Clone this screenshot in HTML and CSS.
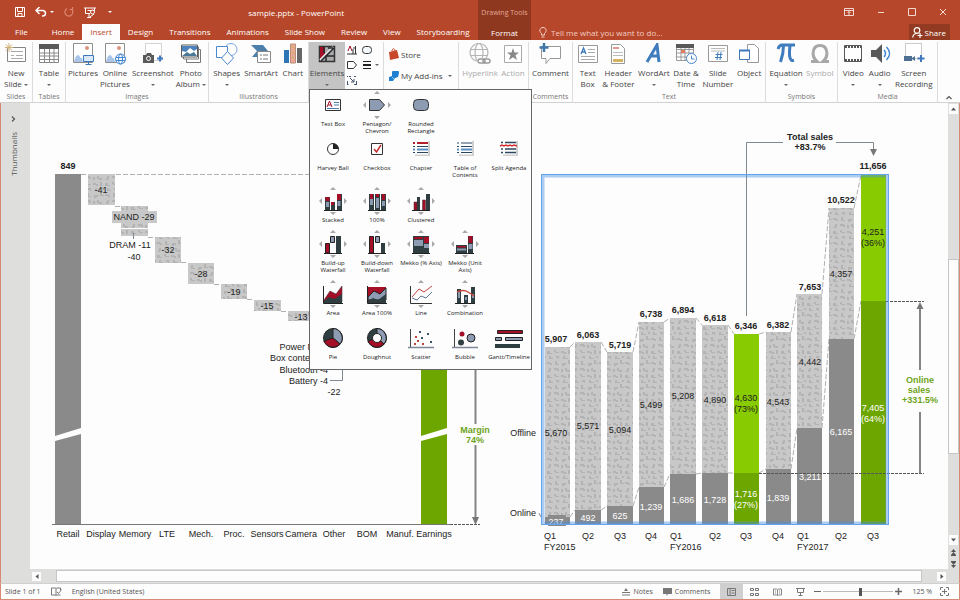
FILE: index.html
```html
<!DOCTYPE html>
<html lang="en">
<head>
  <meta charset="UTF-8">
  <title>sample.pptx - PowerPoint</title>
  <link rel="stylesheet" href="styles.css">
</head>
<body>

<svg class="sprite" aria-hidden="true">
  <!-- resize handles round a chart icon -->
  <symbol id="handles-v" viewBox="0 0 32 28">
    <path d="M13 3l3-3 3 3zM13 25l3 3 3-3z" fill="#a8a8a8"/>
  </symbol>
  <symbol id="handles" viewBox="0 0 32 28">
    <path d="M13 3l3-3 3 3zM13 25l3 3 3-3zM5 11v6l-3-3zM27 11v6l3-3z" fill="#a8a8a8"/>
  </symbol>
</svg>

<div class="window">

  <header class="header">
    <div class="titlebar">
      <div class="quick">
        <button aria-label="Save"><svg width="10" height="10" viewBox="0 0 10 10"><path d="M.5.5h9v9h-9zM2.5.5v4h5v-4M3 9V6.5h4V9" fill="none" stroke="#fff"/></svg></button>
        <button aria-label="Undo"><svg width="12" height="10" viewBox="0 0 12 10"><path d="M4.5 0L1 3.5 4.500 7M1.500 3.500H7.500c4 0 4 5.500 0 5.500H7" fill="none" stroke="#fff" stroke-width="1.5"/></svg><i class="caret light"></i></button>
        <button aria-label="Redo"><svg width="10" height="10" viewBox="0 0 10 10"><path d="M3 1.500a4 4 0 1 0 4.500.5M5.500 2.500H8.500V0" fill="none" stroke="#d98671" stroke-width="1.2"/></svg></button>
        <button aria-label="Start slide show"><svg width="12" height="11" viewBox="0 0 12 11"><path d="M0 1h12M1.500 1v5.500H6M10.500 1v3M5 7v3.500M3 10.500h4M3.500 3.500h5" fill="none" stroke="#fff"/><circle cx="8.5" cy="5" r="2" fill="none" stroke="#fff"/><path d="M6 10l4-3" stroke="#fff"/></svg></button>
        <button aria-label="Customize toolbar"><i class="caret light bar"></i></button>
      </div>
      <span class="title">sample.pptx - PowerPoint</span>
    </div>
    <nav class="tabs">
      <a class="tab file" href="#">File</a>
      <a class="tab" href="#">Home</a>
      <a class="tab active" href="#">Insert</a>
      <a class="tab" href="#">Design</a>
      <a class="tab" href="#">Transitions</a>
      <a class="tab" href="#">Animations</a>
      <a class="tab" href="#">Slide Show</a>
      <a class="tab" href="#">Review</a>
      <a class="tab" href="#">View</a>
      <a class="tab" href="#">Storyboarding</a>
    </nav>
    <div class="context">
      <span>Drawing Tools</span>
      <a href="#">Format</a>
    </div>
    <div class="controls">
      <button aria-label="Ribbon display options"><svg width="10" height="8" viewBox="0 0 10 8"><path d="M.5.5h9v7h-9zM.5 2.500h9M5 7V3.500M3.500 5L5 3.500 6.500 5" fill="none" stroke="#f3d9d2"/></svg></button>
      <button aria-label="Minimize"><svg width="8" height="8" viewBox="0 0 8 8"><path d="M1 4.500h6" stroke="#f3d9d2"/></svg></button>
      <button aria-label="Maximize"><svg width="8" height="8" viewBox="0 0 8 8"><path d="M.5.5h7v7h-7z" fill="none" stroke="#f3d9d2"/></svg></button>
      <button aria-label="Close"><svg width="8" height="8" viewBox="0 0 8 8"><path d="M1 1l6 6M7 1L1 7" stroke="#f3d9d2"/></svg></button>
    </div>
    <div class="help">
      <label class="tell"><svg width="8" height="11" viewBox="0 0 8 11"><path d="M2.500 8V6.500C-.5 4 1 .5 4 .5s4.500 3.500 1.500 6V8zM2.500 10h3" fill="none" stroke="#f5d5cc"/></svg><input type="text" placeholder="Tell me what you want to do..." aria-label="Tell me what you want to do"></label>
      <button class="share"><svg width="11" height="11" viewBox="0 0 11 11"><circle cx="5" cy="3.5" r="2.8" fill="none" stroke="#fff" stroke-width="1.2"/><path d="M.7 10.500C1 8 2.500 6.500 5 6.500M8 6v5M5.500 8.500h5" fill="none" stroke="#fff" stroke-width="1.2"/></svg>Share</button>
    </div>
  </header>

  <div class="ribbon">
    <section class="group">
      <div class="tools">
        <button class="tool"><svg viewBox="0 0 22 22"><path d="M2.500 4.500h18v14h-18z" fill="#fff" stroke="#858585"/><path d="M6 8.500h12M6 12.500h3M11 12.500h7M6 15.500h12" stroke="#aaa"/><path d="M4 0v9M0 4.500h8.500M1 1.500l6 6M7 1.500l-6 6" stroke="#cdb27a"/></svg>New<br><span>Slide <i class="caret"></i></span></button>
      </div>
      <h2>Slides</h2>
    </section>
    <section class="group">
      <div class="tools">
        <button class="tool"><svg viewBox="0 0 22 22"><path d="M1.500 2.500h19v17h-19zM1.500 10h19M1.500 13h19M1.500 16.500h19M6.500 5v14M11.500 5v14M16 5v14" fill="#fff" stroke="#888"/><path d="M1 1h20v5H1z" fill="#595959"/></svg>Table<br><i class="caret"></i></button>
      </div>
      <h2>Tables</h2>
    </section>
    <section class="group">
      <div class="tools">
        <button class="tool"><svg viewBox="0 0 22 22"><path d="M1.500 .5h19v19h-19z" fill="#fff" stroke="#8f8f8f"/><circle cx="15" cy="5" r="2" fill="#d8957b"/><path d="M2 19c1-4 2-7 4-7s2 4 4 3l1 4z" fill="#a9c6ea"/><path d="M11.500 12.500h10v6h-10z" fill="#d9e9f8" stroke="#3f78bb"/><path d="M16.500 19v2M13.500 21.500h6" stroke="#3f78bb"/></svg>Pictures</button>
        <button class="tool"><svg viewBox="0 0 22 22"><path d="M1.500 .5h19v19h-19z" fill="#fff" stroke="#8f8f8f"/><circle cx="15" cy="5" r="2" fill="#d8957b"/><path d="M2 19c1-4 2-7 4-7s2 4 4 3l1 4z" fill="#a9c6ea"/><circle cx="16.5" cy="16" r="5" fill="#fff" stroke="#3f86cf"/><ellipse cx="16.5" cy="16" rx="2" ry="5" fill="none" stroke="#3f86cf"/><path d="M12 14.500h9M12 17.500h9" stroke="#3f86cf"/></svg>Online<br>Pictures</button>
        <button class="tool"><svg viewBox="0 0 22 22"><path d="M3.500 .5h16v17h-16z" fill="#fff" stroke="#aaa" stroke-dasharray="1 1"/><path d="M1 12h3l1-2h4l1 2h2v8H1z" fill="#595959"/><circle cx="6.5" cy="15.5" r="2" fill="none" stroke="#fff"/><path d="M18 12.500v6M15 15.500h6" stroke="#3f78bb" stroke-width="2"/></svg>Screenshot<br><i class="caret"></i></button>
        <button class="tool"><svg viewBox="0 0 22 22"><path d="M6.500 6.500h14v13h-14z" fill="#fff" stroke="#777"/><path d="M3.500 4h15v12h-15z" fill="#fff" stroke="#777"/><path d="M1.500 2h16v12h-16z" fill="#fff" stroke="#595959"/><path d="M2 3h15v3l-3 2-4-3-4 4-4-1z" fill="#4c83bd"/><path d="M2 13l5-4 3 2 4-2 3 4z" fill="#4c7898"/></svg>Photo<br><span>Album <i class="caret"></i></span></button>
      </div>
      <h2>Images</h2>
    </section>
    <section class="group">
      <div class="tools">
        <button class="tool"><svg viewBox="0 0 22 22"><circle cx="15" cy="6.5" r="6" fill="#fff" stroke="#7ba5d8"/><path d="M.5 3.500h11v11H.5z" fill="#fff" stroke="#4b88cf"/><path d="M11.500 8.500l6 6.500-6 6.500-6-6.500z" fill="#fff" stroke="#4b88cf"/></svg>Shapes<br><i class="caret"></i></button>
        <button class="tool"><svg viewBox="0 0 22 22"><path d="M1 2h12l5 6-4 6H2l5-6z" fill="#4d7fab"/><path d="M7.500 8.500h13v11h-13z" fill="#fff" stroke="#888"/><path d="M10 12h2M13 12h5M10 16h2M13 16h5" stroke="#777"/></svg>SmartArt</button>
        <button class="tool"><svg viewBox="0 0 22 22"><path d="M2 7h5v13H2z" fill="#2e75b6"/><path d="M8.500 1h5v19h-5z" fill="#e8a893" stroke="#b98d78"/><path d="M15 5h5v15h-5z" fill="#666"/><path d="M10 4l2 1M10 9l2 1M10 14l2 1" stroke="#c2b84e"/></svg>Chart</button>
      </div>
      <h2>Illustrations</h2>
    </section>

    <section class="group elements">
      <button class="tool open" aria-expanded="true"><svg viewBox="0 0 22 22"><path d="M3.500 3.500h15v15h-15z" fill="#aaa" stroke="#333" stroke-width="1.5"/><path d="M4 4h5v7l-5 5z" fill="#a40e26"/><path d="M4 17L17 4" stroke="#ddd" stroke-width="2"/><path d="M5 18L18 5M10 18v-5h8M8 4v6M12 5h5" fill="none" stroke="#26282c" stroke-width="1.5"/></svg>Elements<br><i class="caret"></i></button>
      <div class="small-tools">
        <button aria-label="Text shape"><svg width="10" height="10" viewBox="0 0 10 10"><path d="M1 6l2-5 2 5" fill="none" stroke="#a40e26"/><path d="M0 9h10M6 9V4M8.500 9V1M6 3h3" stroke="#333"/></svg></button>
        <button aria-label="Rounded rectangle"><svg width="10" height="10" viewBox="0 0 10 10"><rect x=".5" y="1.5" width="9" height="7" rx="3" fill="#f4f7fb" stroke="#333"/></svg></button>
        <button aria-label="Pentagon"><svg width="10" height="10" viewBox="0 0 10 10"><path d="M.5 1.500h6l3 3.500-3 3.500h-6z" fill="#fff" stroke="#333"/></svg></button>
        <button aria-label="Line weight"><svg width="10" height="10" viewBox="0 0 10 10"><path d="M1 1.500h8M1 8.500h8" stroke="#222"/><path d="M1 5h8" stroke="#222" stroke-width="2"/></svg><i class="caret"></i></button>
        <button aria-label="Connector"><svg width="10" height="10" viewBox="0 0 10 10"><path d="M.5 1v1M.5 9.500h1M.5 6v4M9.500 6v4M7 9.500h3M3 3l4 4M7 4v3H4M2 1.500h2M7 1.500h2" fill="none" stroke="#42536e"/></svg></button>
      </div>

      <div class="menu" role="menu">
        <button class="c1 r1" role="menuitem"><svg viewBox="0 0 32 28"><path d="M8.500 8.500h15v11h-15z" fill="#fff" stroke="#333"/><path d="M10 16l2.500-6 2.500 6M11 14h3" fill="none" stroke="#a40e26"/><path d="M17 11.500h5M17 14h5M10 17.500h12" stroke="#4d7fab"/></svg>Text Box</button>
        <button class="c2 r1" role="menuitem"><svg viewBox="0 0 32 28"><use href="#handles"/><path d="M8.500 8.500h10l5 5.500-5 5.500h-10z" fill="#8e9cb3" stroke="#333"/></svg>Pentagon/<br>Chevron</button>
        <button class="c3 r1" role="menuitem"><svg viewBox="0 0 32 28"><rect x="8.5" y="8.5" width="15" height="11" rx="4" fill="#8e9cb3" stroke="#333"/></svg>Rounded<br>Rectangle</button>

        <button class="c1 r2" role="menuitem"><svg viewBox="0 0 32 28"><circle cx="16" cy="14" r="5.5" fill="#fff" stroke="#333"/><path d="M16 14V8.500A5.500 5.500 0 0 1 21.500 14z" fill="#222"/></svg>Harvey Ball</button>
        <button class="c2 r2" role="menuitem"><svg viewBox="0 0 32 28"><path d="M10.500 8.500h11v11h-11z" fill="#fff" stroke="#333"/><path d="M13 14l2.500 3 4.500-7" fill="none" stroke="#c23030" stroke-width="1.5"/></svg>Checkbox</button>
        <button class="c3 r2" role="menuitem"><svg viewBox="0 0 32 28"><path d="M10 6h15v15H10z" fill="#d0d0d0"/><path d="M9 5.500h14v14H9z" fill="#fff"/><path d="M12 8h11M8 8h2" stroke="#b3202c" stroke-width="2"/><path d="M8 11.500h2M12 11.500h11M8 17.500h2M12 17.500h11" stroke="#2d4660"/><path d="M8 14.500h2M12 14.500h11" stroke="#5b8fc4" stroke-width="2"/></svg>Chapter</button>
        <button class="c4 r2" role="menuitem"><svg viewBox="0 0 32 28"><path d="M10 6h15v15H10z" fill="#d0d0d0"/><path d="M9 5.500h14v14H9z" fill="#fff"/><path d="M8 8h2M12 8h11M8 11.500h2M12 11.500h11M8 17.500h2M12 17.500h11" stroke="#2d4660"/><path d="M8 14.500h2M12 14.500h11" stroke="#5b8fc4" stroke-width="2"/></svg>Table of<br>Contents</button>
        <button class="c5 r2" role="menuitem"><svg viewBox="0 0 32 28"><path d="M10 6h15v15H10z" fill="#d0d0d0"/><path d="M9 5.500h14v14H9z" fill="#fff"/><path d="M8 7.500h2M12 7.500h11M8 14h2M12 14h11M8 17.500h2M12 17.500h11" stroke="#2d4660" stroke-width="1.5"/><path d="M7 11l2-1 2 1 2-1 2 1 2-1 2 1 2-1 3 1" fill="none" stroke="#d23030" stroke-width="1.5"/></svg>Split Agenda</button>

        <button class="c1 r3" role="menuitem"><svg viewBox="0 0 32 28"><use href="#handles"/><path d="M8 10h5v13H8zM14 15h4v8h-4zM20 7h5v16h-5z" fill="#2f3e40"/><path d="M8.500 10h4v4h-4zM20 7h4v6h-4zM14 15h3v3h-3z" fill="#a40e26"/><path d="M9 15h3v5H9zM20.500 14h3v5h-3z" fill="#8e9cb3"/><path d="M7 23.500h18" stroke="#222"/></svg>Stacked</button>
        <button class="c2 r3" role="menuitem"><svg viewBox="0 0 32 28"><use href="#handles"/><path d="M8 7h5v16H8zM14 7h5v16h-5zM20 7h5v16h-5z" fill="#2f3e40"/><path d="M9 7h3v5H9zM15 7h3v3h-3zM21 7h3v6h-3z" fill="#a40e26"/><path d="M9 12h3v6H9zM15 11h3v10h-3zM21 14h3v5h-3z" fill="#8e9cb3"/><path d="M7 23.500h18" stroke="#222"/></svg>100%</button>
        <button class="c3 r3" role="menuitem"><svg viewBox="0 0 32 28"><use href="#handles"/><path d="M12 10h3v13h-3zM21 7h4v16h-4z" fill="#2f3e40"/><path d="M9 15h3v8H9zM17.500 13h3v10h-3z" fill="#a40e26" stroke="#333" stroke-width=".5"/><path d="M7 23.500h18" stroke="#222"/></svg>Clustered</button>

        <button class="c1 r4" role="menuitem"><svg viewBox="0 0 32 28"><use href="#handles"/><path d="M19 6h5v17h-5z" fill="#2f3e40"/><path d="M8.500 13.500h4V23h-4z" fill="#a40e26" stroke="#222"/><path d="M13.500 6.500h4v6h-4z" fill="#8e9cb3" stroke="#222"/><path d="M7 23.500h18" stroke="#222"/></svg>Build-up<br>Waterfall</button>
        <button class="c2 r4" role="menuitem"><svg viewBox="0 0 32 28"><use href="#handles"/><path d="M8.500 6.500h4V23h-4z" fill="#a40e26" stroke="#222"/><path d="M14.500 6.500h4v6h-4z" fill="#8e9cb3" stroke="#222"/><path d="M20 13h4v10h-4z" fill="#2f3e40"/><path d="M7 23.500h18" stroke="#222"/></svg>Build-down<br>Waterfall</button>
        <button class="c3 r4" role="menuitem"><svg viewBox="0 0 32 28"><use href="#handles"/><path d="M8 6h16v17H8z" fill="#2f3e40"/><path d="M9 7h9v2H9zM19 7h5v6h-5z" fill="#a40e26"/><path d="M9 10h9v6H9zM19 14h5v4h-5z" fill="#8e9cb3"/><path d="M7 23.500h18" stroke="#222"/></svg>Mekko (% Axis)</button>
        <button class="c4 r4" role="menuitem"><svg viewBox="0 0 32 28"><use href="#handles"/><path d="M7 15h11v8H7zM19 6h5v17h-5z" fill="#2f3e40"/><path d="M19.500 6h4v7h-4zM8 16h9v1.500H8z" fill="#a40e26"/><path d="M8 18.500h9v2H8zM19.500 14h4v5h-4z" fill="#8e9cb3"/><path d="M6 23.500h19" stroke="#222"/></svg>Mekko (Unit<br>Axis)</button>

        <button class="c1 r5" role="menuitem"><svg viewBox="0 0 32 28"><use href="#handles-v"/><path d="M7 20l6-9 6 3 6-8v16H7z" fill="#a40e26" stroke="#333" stroke-width=".5"/><path d="M7 21l5-4 5 2 8-5v9H7z" fill="#2f3e40"/><path d="M6.500 6v17.500H26" fill="none" stroke="#222"/></svg>Area</button>
        <button class="c2 r5" role="menuitem"><svg viewBox="0 0 32 28"><use href="#handles-v"/><path d="M7 7h18v16H7z" fill="#a40e26"/><path d="M7 17l6-6 6 3 6-6v12H7z" fill="#8e9cb3" stroke="#222"/><path d="M7 21l5-3 5 2 8-6v9H7z" fill="#2f3e40"/><path d="M6.500 6v17.500H26" fill="none" stroke="#222"/></svg>Area 100%</button>
        <button class="c3 r5" role="menuitem"><svg viewBox="0 0 32 28"><use href="#handles-v"/><path d="M7 17l7-8 5 3 8-6" fill="none" stroke="#c4453f"/><path d="M7 18l5 2 4-4 5 2 6-6" fill="none" stroke="#5c7797"/><path d="M5.500 6v17.500H27" fill="none" stroke="#333"/></svg>Line</button>
        <button class="c4 r5" role="menuitem"><svg viewBox="0 0 32 28"><use href="#handles-v"/><path d="M8 9h4v14H8zM15 15h4v8h-4zM22 7h4v16h-4z" fill="#2f3e40"/><path d="M9 12h2v6H9zM16 17h2v3h-2zM23 14h2v4h-2z" fill="#8e9cb3"/><path d="M8 12c8-3 10-1 17 4" fill="none" stroke="#c4453f" stroke-width="1.5"/><path d="M6 23.500h20" stroke="#222"/></svg>Combination</button>

        <button class="c1 r6" role="menuitem"><svg viewBox="0 0 32 28"><circle cx="16" cy="14" r="9.5" fill="#2f3e40" stroke="#222"/><path d="M16 14V4.500A9.500 9.500 0 0 1 23 20z" fill="#8e9cb3" stroke="#222"/><path d="M16 14L23 20A9.500 9.500 0 0 1 7 17z" fill="#a40e26" stroke="#222"/></svg>Pie</button>
        <button class="c2 r6" role="menuitem"><svg viewBox="0 0 32 28"><circle cx="16" cy="14" r="9.5" fill="#2f3e40" stroke="#222"/><path d="M16 14V4.500A9.500 9.500 0 0 1 23 20z" fill="#8e9cb3" stroke="#222"/><path d="M16 14L23 20A9.500 9.500 0 0 1 7 17z" fill="#a40e26" stroke="#222"/><circle cx="16" cy="14" r="4.5" fill="#fff" stroke="#222"/></svg>Doughnut</button>
        <button class="c3 r6" role="menuitem"><svg viewBox="0 0 32 28"><path d="M5.500 5v19" stroke="#444"/><path d="M3 23.500h26" stroke="#7d8798" stroke-width="1.5"/><path d="M14 7h2v2h-2zM22 9h2v2h-2zM16 13h2v2h-2zM25 17h2v2h-2z" fill="#3d526b"/><path d="M10 12h2v2h-2zM12 16h2v2h-2zM9 19h2v2H9zM17 19h2v2h-2z" fill="#c4453f"/></svg>Scatter</button>
        <button class="c4 r6" role="menuitem"><svg viewBox="0 0 32 28"><path d="M5.500 5v19" stroke="#444"/><path d="M3 23.500h26" stroke="#7d8798" stroke-width="1.5"/><circle cx="13" cy="10" r="2.5" fill="#a40e26"/><circle cx="22" cy="14" r="4" fill="#8e9cb3" stroke="#222"/><circle cx="12" cy="18.5" r="3" fill="#2f3e40"/></svg>Bubble</button>
        <button class="c5 r6" role="menuitem"><svg viewBox="0 0 32 28"><path d="M4.500 6.500h25v3h-25z" fill="#a40e26" stroke="#222"/><path d="M2.500 13.500h6v3h-6zM12.500 13.500h17v3h-17z" fill="#8e9cb3" stroke="#222"/><path d="M2 20h25v4H2z" fill="#2f3e40"/></svg>Gantt/Timeline</button>
      </div>
    </section>

    <section class="group addins">
      <button><svg width="10" height="12" viewBox="0 0 10 12"><path d="M0 4l8-2 2 8-9 2z" fill="#c8472b"/><path d="M3 3c0-3 3-3 3 0" fill="none" stroke="#c8472b"/></svg>Store</button>
      <button><svg width="10" height="10" viewBox="0 0 10 10"><path d="M3 2a3 3 0 0 1 7 0l-1 4-3 1-2 3H0V6l3-1z" fill="#1f7fd0"/><path d="M3 6l2 2" stroke="#8cc1ee"/></svg>My Add-ins<i class="caret"></i></button>
    </section>
    <section class="group">
      <div class="tools">
        <button class="tool" disabled><svg viewBox="0 0 22 22"><g fill="none" stroke="#b5b5b5" stroke-width="1.2"><circle cx="10" cy="9.5" r="9"/><ellipse cx="10" cy="9.5" rx="4" ry="9"/><path d="M1 6.500h18M1 12.500h18"/></g><path d="M8 15h14v6H8z" fill="#fff"/><rect x="9" y="16" width="7" height="4" rx="2" fill="none" stroke="#999" stroke-width="1.5"/><rect x="14" y="16" width="7" height="4" rx="2" fill="none" stroke="#999" stroke-width="1.5"/></svg>Hyperlink</button>
        <button class="tool" disabled><svg viewBox="0 0 22 22"><path d="M2.500 2.500h17v17h-17z" fill="#fff" stroke="#aaa"/><path d="M11 5l1.500 4.500H17l-3.500 2.800L15 17l-4-2.800L7 17l1.500-4.700L5 9.500h4.500z" fill="#888"/></svg>Action</button>
      </div>
      <h2></h2>
    </section>
    <section class="group">
      <div class="tools">
        <button class="tool"><svg viewBox="0 0 22 22"><path d="M2.500 3.500h19v12H11l-4 5v-5H2.500z" fill="#fff" stroke="#999"/><path d="M5 0v9M.5 4.500h9" stroke="#3f78ab" stroke-width="2.5"/></svg>Comment</button>
      </div>
      <h2>Comments</h2>
    </section>
    <section class="group">
      <div class="tools">
        <button class="tool"><svg viewBox="0 0 22 22"><path d="M1.500 2.500h19v17h-19z" fill="#fff" stroke="#999"/><path d="M4 11l2.500-6L9 11M5 9h3" fill="none" stroke="#3f78bb" stroke-width="1.3"/><path d="M11 6.500h7M11 9.500h7M4 13.500h14M4 16.500h14" stroke="#aaa"/></svg>Text<br>Box</button>
        <button class="tool"><svg viewBox="0 0 22 22"><path d="M4.500 1.500h9l4 4v15h-13z" fill="#fff" stroke="#999"/><path d="M6 4h6v2H6z" fill="#e19b89"/><path d="M6 9.500h10M6 12.500h10" stroke="#bbb"/><path d="M6 16h10v3H6z" fill="#d5b25f"/></svg>Header<br>&amp; Footer</button>
        <button class="tool"><svg viewBox="0 0 22 22"><path d="M4 19L14 2l2 17M8 13h8" fill="none" stroke="#3f7dbe" stroke-width="3"/></svg>WordArt<br><i class="caret"></i></button>
        <button class="tool"><svg viewBox="0 0 22 22"><path d="M1.500 2.500h17v15h-17zM1.500 6.500h17M1.500 10h17M1.500 14h17M6 4v13M10 4v13M14 4v13" fill="#fff" stroke="#999"/><path d="M1 1h18v4H1z" fill="#595959"/><path d="M6 7h4v3H6z" fill="#e07d5e"/><circle cx="16.5" cy="15.5" r="5" fill="#fff" stroke="#4b88cf"/><path d="M16.500 12.500v3.500h3" fill="none" stroke="#4b88cf"/></svg>Date &amp;<br>Time</button>
        <button class="tool"><svg viewBox="0 0 22 22"><path d="M1.500 2.500h19v16h-19z" fill="#fff" stroke="#999"/><path d="M4 5.500h14M4 8h14" stroke="#bbb"/><path d="M11 9l-1 8M14 9l-1 8M8.500 11.500h7M8 14.500h7" stroke="#3f7dbe"/></svg>Slide<br>Number</button>
        <button class="tool"><svg viewBox="0 0 22 22"><path d="M9.500 1.500h7l4 4v14h-11z" fill="#fff" stroke="#999"/><path d="M1.500 7.500h10v9h-10z" fill="#fff" stroke="#3f78bb"/><path d="M1 6.500h11v2H1z" fill="#3f78bb"/></svg>Object</button>
      </div>
      <h2>Text</h2>
    </section>
    <section class="group">
      <div class="tools">
        <button class="tool"><svg viewBox="0 0 22 22"><path d="M3 6c1-3 2-4 4-4h13M8.500 2.500c0 7-1 11-3 16.500M15 2.500c-1 9-1 16 4 15" fill="none" stroke="#3f7dbe" stroke-width="3"/></svg>Equation<br><i class="caret"></i></button>
        <button class="tool" disabled><svg viewBox="0 0 22 22"><path d="M2 18.500h6c-6-5-5-16 3-16s9 11 3 16h6" fill="none" stroke="#a8a8a8" stroke-width="3"/></svg>Symbol</button>
      </div>
      <h2>Symbols</h2>
    </section>
    <section class="group">
      <div class="tools">
        <button class="tool"><svg viewBox="0 0 22 22"><path d="M2.500 2.500h17v16h-17z" fill="#fff" stroke="#595959"/><path d="M3 4h16M3 17h16" stroke="#555" stroke-width="2" stroke-dasharray="2 1"/></svg>Video<br><i class="caret"></i></button>
        <button class="tool"><svg viewBox="0 0 22 22"><path d="M2 7h5l6-6v19l-6-6H2z" fill="#595959"/><path d="M15 7c2 2 2 5 0 7M17.500 4c4 4 4 9 0 13" fill="none" stroke="#3f86cf" stroke-width="1.5"/></svg>Audio<br><i class="caret"></i></button>
        <button class="tool"><svg viewBox="0 0 22 22"><path d="M2.500 .5h16v15h-16z" fill="#fff" stroke="#999" stroke-dasharray="1 1"/><path d="M1 13h8v5H1zM9 15l3-2v5l-3-2z" fill="#4d6f91"/><path d="M18 12v7M14.500 15.500h7" stroke="#3f78bb" stroke-width="2"/></svg>Screen<br>Recording</button>
      </div>
      <h2>Media</h2>
    </section>
    <button class="collapse" aria-label="Collapse the ribbon"><svg width="6" height="5" viewBox="0 0 6 5"><path d="M.5 4L3 1.500 5.500 4" fill="none" stroke="#555" stroke-width="1.2"/></svg></button>
  </div>

  <main class="workspace">
    <aside class="thumbs">
      <button aria-label="Expand thumbnails"><svg width="5" height="6" viewBox="0 0 5 6"><path d="M1 .5L3.500 3 1 5.500" fill="none" stroke="#555" stroke-width="1.2"/></svg></button>
      <span>Thumbnails</span>
    </aside>

    <div class="slide">
      <svg viewBox="30 103 918 466" class="charts">
        <defs>
          <pattern id="grain" width="26" height="24" patternUnits="userSpaceOnUse">
            <rect width="26" height="24" fill="#c8c8c8"/>
            <path d="M1 2h3v1h2v2H4V4H1zM9 1h2v3h2v1H9zM16 3h4v2h-2v1h-2zM22 0h2v3h2v1h-4zM3 8h2v3H4v1H2v-2h1zM8 8h4v1h1v2h-2v-1H8zM15 9h2v3h-2zM19 8h2v2h3v2h-3v-1h-2zM1 15h3v2h2v1H1zM8 14h2v2h3v1H9v-1H8zM15 15h3v1h2v2h-2v-1h-3zM22 14h2v4h-2zM3 20h2v2h2v1H3zM10 20h3v3h-1v-1h-2zM17 20h2v2h3v1h-5zM24 20h2v2h-2z" fill="#b3b3b3"/>
          </pattern>
        </defs>

        <!-- cost waterfall -->
        <path class="dash" d="M81 174.500H450M115 206.500H121M148 237.500H155M181 262.500H188M214 284.500H221M247 299.500H254M281 311.500H288"/>
        <path class="dark" d="M55 174H81V428L55 436zM55 441L81 434V524H55z"/>
        <path class="green" d="M421 300H447V428L421 436zM421 441L447 434V524H421z"/>
        <path class="light" d="M88 174h27v31H88zM121 206h27v22h-27zM121 229h27v7h-27zM155 237h26v26h-26zM188 263h26v21h-26zM221 284h26v15h-26zM254 300h27v11h-27zM288 311h26v10h-26z"/>
        <path fill="#c8c8c8" d="M112 211h45v12h-45z"/>
        <path class="line" d="M133.500 233v6M330 380.500h12.500V368"/>
        <path class="axis" d="M52 524.500H450"/>
        <path class="dash deep" d="M450 524.500H480"/>
        <path class="arrow" d="M475.500 360V424M475.500 445V518"/>
        <path fill="#777" d="M472 517h7l-3.500 8z"/>

        <text class="bold" x="68" y="169">849</text>
        <g>
          <text x="101" y="193">-41</text>
          <text x="134" y="220">NAND -29</text>
          <text x="130" y="248">DRAM -11</text>
          <text x="134" y="260">-40</text>
          <text x="168" y="253">-32</text>
          <text x="201" y="277">-28</text>
          <text x="234" y="295">-19</text>
          <text x="267" y="309">-15</text>
          <text x="301" y="320">-13</text>
          <text x="334" y="395">-22</text>
        </g>
        <g class="end">
          <text x="328" y="350">Power M. -4</text>
          <text x="328" y="361">Box content -4</text>
          <text x="328" y="373">Bluetooth -4</text>
          <text x="328" y="384">Battery -4</text>
        </g>
        <g>
          <text x="68" y="537">Retail</text>
          <text x="101" y="537">Display</text>
          <text x="135" y="537">Memory</text>
          <text x="167" y="537">LTE</text>
          <text x="201" y="537">Mech.</text>
          <text x="234" y="537">Proc.</text>
          <text x="267" y="537">Sensors</text>
          <text x="301" y="537">Camera</text>
          <text x="334" y="537">Other</text>
          <text x="367" y="537">BOM</text>
          <text x="400" y="537">Manuf.</text>
          <text x="434" y="537">Earnings</text>
        </g>
        <text class="bold lime" x="475" y="433">Margin</text>
        <text class="bold lime" x="475" y="443">74%</text>

        <!-- quarterly sales -->
        <path class="dash" d="M570 347L575 342M601 342L607 352M633 352L639 322M664 322L670 318M696 318L702 325M728 325L734 334M759 334L766 332M791 332L797 294M822 294L829 208M854 208L861 175M570 517L575 510M601 510L607 506M633 506L639 487M664 487L670 474M696 474L702 473M728 473H734M759 473L766 469M791 469L797 428M822 428L829 339M854 339L861 301"/>
        <path class="light" d="M545 347h25v170h-25zM575 342h26v168h-26zM607 352h26v154h-26zM639 322h25v165h-25zM670 318h26v156h-26zM702 325h26v148h-26zM766 332h25v137h-25zM797 294h25v134h-25zM829 208h25v131h-25z"/>
        <path class="dark" d="M545 517h25v7h-25zM575 510h26v14h-26zM607 506h26v18h-26zM639 487h25v37h-25zM670 474h26v50h-26zM702 473h26v51h-26zM766 469h25v55h-25zM797 428h25v96h-25zM829 339h25v185h-25z"/>
        <path class="lime-bar" d="M734 334h25v139h-25zM861 175h25v126h-25z"/>
        <path class="green" d="M734 473h25v51h-25zM861 301h25v223h-25z"/>
        <path class="dash deep" d="M886 301.500H924M759 473.500H924"/>
        <path fill="#8a8a8a" d="M548 515h18v11h-18z"/>

        <g class="bold">
          <text x="556" y="342">5,907</text>
          <text x="588" y="338">6,063</text>
          <text x="620" y="348">5,719</text>
          <text x="651" y="317">6,738</text>
          <text x="683" y="313">6,894</text>
          <text x="715" y="321">6,618</text>
          <text x="746" y="329">6,346</text>
          <text x="778" y="328">6,382</text>
          <text x="810" y="290">7,653</text>
          <text x="841" y="203">10,522</text>
          <text x="873" y="169">11,656</text>
          <text x="810" y="140">Total sales</text>
          <text x="810" y="150">+83.7%</text>
        </g>
        <g>
          <text x="556" y="436">5,670</text>
          <text x="588" y="429">5,571</text>
          <text x="620" y="433">5,094</text>
          <text x="651" y="408">5,499</text>
          <text x="683" y="399">5,208</text>
          <text x="715" y="403">4,890</text>
          <text x="746" y="401">4,630</text>
          <text x="746" y="412">(73%)</text>
          <text x="778" y="405">4,543</text>
          <text x="810" y="365">4,442</text>
          <text x="841" y="277">4,357</text>
          <text x="873" y="235">4,251</text>
          <text x="873" y="246">(36%)</text>
        </g>
        <g class="white">
          <text x="556" y="525">237</text>
          <text x="588" y="521">492</text>
          <text x="620" y="519">625</text>
          <text x="651" y="510">1,239</text>
          <text x="683" y="503">1,686</text>
          <text x="715" y="503">1,728</text>
          <text x="746" y="497">1,716</text>
          <text x="746" y="508">(27%)</text>
          <text x="778" y="501">1,839</text>
          <text x="810" y="480">3,211</text>
          <text x="841" y="435">6,165</text>
          <text x="873" y="411">7,405</text>
          <text x="873" y="422">(64%)</text>
        </g>
        <g class="end">
          <text x="536" y="436">Offline</text>
          <text x="536" y="516">Online</text>
        </g>
        <g>
          <text x="588" y="539">Q2</text>
          <text x="620" y="539">Q3</text>
          <text x="651" y="539">Q4</text>
          <text x="715" y="539">Q2</text>
          <text x="746" y="539">Q3</text>
          <text x="778" y="539">Q4</text>
          <text x="841" y="539">Q2</text>
          <text x="873" y="539">Q3</text>
        </g>
        <g class="start">
          <text x="544" y="539">Q1</text>
          <text x="544" y="550">FY2015</text>
          <text x="670" y="539">Q1</text>
          <text x="670" y="550">FY2016</text>
          <text x="797" y="539">Q1</text>
          <text x="797" y="550">FY2017</text>
        </g>

        <!-- growth arrows -->
        <path class="line" d="M746.500 316V142.500H783M836 142.500H873.500V150M539 513l2 4"/>
        <path fill="#777" d="M870 149h7l-3.500 7z"/>
        <path class="arrow" d="M920 308V370M920 412V473"/>
        <path fill="#777" d="M916.500 309h7l-3.500-7z"/>
        <g class="bold lime">
          <text x="920" y="383">Online</text>
          <text x="919" y="393">sales</text>
          <text x="920" y="403">+331.5%</text>
        </g>

        <!-- selection frame -->
        <rect class="select-soft" x="543" y="176" width="344" height="347"/>
        <rect class="select" x="541.5" y="174.5" width="347" height="350"/>
      </svg>
    </div>

    <div class="vscroll">
      <button aria-label="Scroll up"><svg width="5" height="4" viewBox="0 0 5 4"><path d="M0 3.500L2.500 .5 5 3.500z"/></svg></button>
      <div class="track"><div class="thumb"></div></div>
      <button aria-label="Scroll down"><svg width="5" height="4" viewBox="0 0 5 4"><path d="M0 .5h5L2.500 3.500z"/></svg></button>
      <button aria-label="Previous slide"><svg width="5" height="7" viewBox="0 0 5 7"><path d="M0 3L2.500 0 5 3zM0 6l2.500-3L5 6zM0 6h5v1H0z"/></svg></button>
      <button aria-label="Next slide"><svg width="5" height="7" viewBox="0 0 5 7"><path d="M0 0h5v1H0zM0 1h5L2.500 4zM0 4h5L2.500 7z"/></svg></button>
    </div>

    <div class="hscroll">
      <button aria-label="Scroll left"><svg width="4" height="5" viewBox="0 0 4 5"><path d="M3.500 0v5L.5 2.500z"/></svg></button>
      <div class="thumb"></div>
      <button aria-label="Scroll right"><svg width="4" height="5" viewBox="0 0 4 5"><path d="M.5 0v5l3-2.500z"/></svg></button>
    </div>
  </main>

  <footer class="status">
    <span>Slide 1 of 1</span>
    <button aria-label="Spelling"><svg width="11" height="9" viewBox="0 0 11 9"><path d="M5 1.500v7M.5 1h4l.5.5.5-.5h4v2M.5 1v7h4l.5.5.5-.5h4M6 5l1.500 1.500 3-4" fill="none" stroke="#777"/></svg></button>
    <span>English (United States)</span>
    <button class="notes"><svg width="8" height="8" viewBox="0 0 8 8"><path d="M0 4.500h8M0 7h8" stroke="#777"/><path d="M2 3l2-3 2 3z" fill="#777"/></svg>Notes</button>
    <button class="comments"><svg width="9" height="8" viewBox="0 0 9 8"><path d="M0 0h9v6H5L3.500 8V6H0z" fill="#777"/></svg>Comments</button>
    <div class="views">
      <button class="on" aria-label="Normal"><svg width="9" height="8" viewBox="0 0 9 8"><path d="M.5.5h8v7h-8zM3 .5v7M4.500 2.500h3M4.500 5h3" fill="none" stroke="#777"/></svg></button>
      <button aria-label="Slide sorter"><svg width="9" height="8" viewBox="0 0 9 8"><path d="M.5.5h3v2h-3zM5.500 .5h3v2h-3zM.5 5.500h3v2h-3zM5.500 5.500h3v2h-3z" fill="none" stroke="#777"/></svg></button>
      <button aria-label="Reading view"><svg width="9" height="8" viewBox="0 0 9 8"><path d="M.5 1h3l1 .5 1-.5h3v6h-3l-1 .5-1-.5h-3zM4.500 1.500v6M2 3h1M2 5h1M6 3h1M6 5h1" fill="none" stroke="#888"/></svg></button>
      <button aria-label="Slide show"><svg width="9" height="8" viewBox="0 0 9 8"><path d="M0 .5h9M1.500 1v3.500h6V1M4.500 5v2M2.500 7.500h4" fill="none" stroke="#777"/></svg></button>
    </div>
    <div class="zoom">
      <button aria-label="Zoom out"><svg width="7" height="7" viewBox="0 0 7 7"><path d="M0 3.500h7" stroke="#666"/></svg></button>
      <input type="range" min="0" max="100" value="53" aria-label="Zoom">
      <button aria-label="Zoom in"><svg width="7" height="7" viewBox="0 0 7 7"><path d="M0 3.500h7M3.500 0v7" stroke="#666" stroke-width="1.5"/></svg></button>
      <span>125 %</span>
      <button aria-label="Fit slide to window"><svg width="9" height="9" viewBox="0 0 9 9"><path d="M.5 3V.5H3M6 .5h2.500V3M8.500 6v2.500H6M3 8.500H.5V6M4.500 2v5M2 4.500h5" fill="none" stroke="#777"/></svg></button>
    </div>
  </footer>
</div>

</body>
</html>
```

FILE: styles.css
```css
* {
  box-sizing: border-box;
}

body {
  margin: 0;
  font-family: "Open Sans", "Noto Sans", sans-serif;
  font-size: 8px;
  line-height: 11px;
  color: #444;
}

button {
  margin: 0;
  padding: 0;
  border: 0;
  background: none;
  font: inherit;
  color: inherit;
}

a {
  color: inherit;
  text-decoration: none;
}

svg {
  display: block;
  flex: none;
}

.sprite {
  position: absolute;
  width: 0;
  height: 0;
}

.window {
  display: flex;
  flex-direction: column;
  height: 100vh;
}

.caret {
  display: inline-block;
  border: 2px solid transparent;
  border-top-color: #666;
  border-bottom: 0;
  vertical-align: middle;
}

.caret.light {
  border-top-color: #fff;
}

/* title bar and tabs */
.header {
  display: grid;
  grid-template-columns: 478fr 53fr 429fr;
  grid-template-rows: 24px 16px;
  background: #b7472a;
  color: #fff;
}

.titlebar {
  grid-area: 1 / 1;
  display: flex;
  align-items: center;
  justify-content: space-between;
  padding-left: 15px;
}

.quick {
  display: flex;
  align-items: center;
  gap: 10px;
}

.quick button {
  display: flex;
  align-items: center;
  gap: 3px;
}

.caret.bar {
  margin-left: 2px;
}

.title {
  margin-right: 134px;
}

.tabs {
  grid-area: 2 / 1;
  display: flex;
}

.tab {
  padding: 0 8px;
  line-height: 16px;
  white-space: nowrap;
}

.tab.file {
  padding: 0 16px 0 15px;
}

.tab.active {
  background: #fdfdfd;
  color: #b7472a;
}

.context {
  grid-area: 1 / 2 / 3 / 3;
  display: grid;
  grid-template-rows: 24px 16px;
  justify-items: center;
  align-items: center;
  background: #8f3820;
  white-space: nowrap;
}

.context span {
  color: #e3a796;
  font-size: 7px;
}

.controls {
  grid-area: 1 / 3;
  display: flex;
  align-items: center;
  justify-content: flex-end;
  gap: 23px;
  padding-right: 13px;
}

.help {
  grid-area: 2 / 3;
  display: flex;
  justify-content: space-between;
  padding: 0 10px 0 8px;
}

.tell {
  display: flex;
  align-items: center;
  gap: 4px;
  flex: 0 1 200px;
}

.tell input {
  flex: 1;
  min-width: 0;
  padding: 0;
  border: 0;
  background: none;
  font: inherit;
  color: #fff;
}

.tell input::placeholder {
  color: #f0cdc3;
  opacity: 1;
}

.share {
  display: flex;
  align-items: center;
  gap: 2px;
  padding: 0 4px 0 3px;
  background: #933b22;
}

/* ribbon */
.ribbon {
  position: relative;
  z-index: 2;
  display: grid;
  grid-template-columns: 33fr 33fr 143fr 100fr 75fr 75fr 70fr 44fr 193fr 72fr 100fr 22fr;
  height: 63px;
  padding-top: 2px;
  background: #fdfdfd;
  border-bottom: 1px solid #d2d2d2;
}

.group {
  min-width: 0;
  border-right: 1px solid #dcdcdc;
  display: flex;
  flex-direction: column;
}

.tools {
  display: flex;
  justify-content: space-evenly;
  flex: 1;
}

.tool {
  display: block;
  align-self: flex-start;
  min-width: 0;
  padding-top: 1px;
  text-align: center;
  white-space: nowrap;
}

.tool svg {
  width: 22px;
  height: 22px;
  margin: 0 auto 2px;
}

.tool:disabled {
  color: #aaa;
}

.group h2 {
  margin: 0;
  height: 11px;
  font-size: 7px;
  line-height: 10px;
  font-weight: normal;
  text-align: center;
  color: #777;
}

.elements {
  position: relative;
  flex-direction: row;
}

.tool.open {
  width: 37px;
  align-self: stretch;
  padding-bottom: 14px;
  background: #c4c4c4;
}

.small-tools {
  display: grid;
  grid-template-columns: 15px 21px;
  grid-auto-rows: 15px;
  padding-left: 2px;
}

.small-tools button {
  display: flex;
  align-items: center;
  gap: 3px;
}

.addins {
  padding: 6px 0 0 5px;
  gap: 10px;
}

.addins button {
  display: flex;
  align-items: center;
  gap: 2px;
  white-space: nowrap;
}

.addins .caret {
  margin-left: 4px;
}

.collapse {
  align-self: end;
  justify-self: center;
  padding-bottom: 3px;
}

/* elements gallery */
.menu {
  position: absolute;
  top: 47px;
  left: 0;
  display: grid;
  grid-template-columns: repeat(5, 44px);
  grid-template-rows: 44px 52px 43px 50px 44px 46px;
  width: 223px;
  padding-left: 1px;
  border: 1px solid #666;
  background: #fdfdfd;
  font-size: 6px;
  line-height: 7px;
  color: #222;
}

.menu button {
  display: block;
  align-self: start;
  text-align: center;
  white-space: nowrap;
}

.menu svg {
  width: 32px;
  height: 28px;
  margin: 1px auto 2px;
}

.c1 { grid-column: 1; }
.c2 { grid-column: 2; }
.c3 { grid-column: 3; }
.c4 { grid-column: 4; }
.c5 { grid-column: 5; }
.r1 { grid-row: 1; }
.r2 { grid-row: 2; }
.r3 { grid-row: 3; }
.r4 { grid-row: 4; }
.r5 { grid-row: 5; }
.r6 { grid-row: 6; }

/* workspace */
.workspace {
  flex: 1;
  min-height: 0;
  display: grid;
  grid-template-columns: 29px 1fr 11px;
  grid-template-rows: 1fr 14px;
  border: solid #d98a76;
  border-width: 0 1px;
  background: #dededc;
}

.thumbs {
  grid-row: 1 / 3;
  display: flex;
  flex-direction: column;
  align-items: center;
  gap: 10px;
  padding: 13px 5px 0 0;
  color: #555;
}

.thumbs span {
  writing-mode: vertical-rl;
  transform: rotate(180deg);
}

.slide {
  min-width: 0;
  min-height: 0;
  background: #fdfdfd;
  overflow: hidden;
}

.charts {
  width: 100%;
  height: 100%;
  font-family: "Liberation Sans", Arial, sans-serif;
  font-size: 9px;
}

.charts text {
  text-anchor: middle;
  fill: #222;
}

.charts .start text {
  text-anchor: start;
}

.charts .end text {
  text-anchor: end;
}

.charts .bold {
  font-weight: bold;
}

.charts .white text {
  fill: #fff;
}

.charts .lime,
.charts .lime text {
  fill: #6ea41a;
}

.light { fill: url(#grain); }
.dark { fill: #8a8a8a; }
.green { fill: #6ea600; }
.lime-bar { fill: #88cb00; }

.dash {
  fill: none;
  stroke: #b0b0b0;
  stroke-dasharray: 5 2;
}

.dash.deep {
  stroke: #555;
  stroke-dasharray: 3 1;
}

.line {
  fill: none;
  stroke: #808890;
}

.axis {
  stroke: #777;
}

.arrow {
  stroke: #858585;
  stroke-width: 2;
}

.select {
  fill: none;
  stroke: #66a3ee;
}

.select-soft {
  fill: none;
  stroke: #4a90e2;
  stroke-opacity: .45;
  stroke-width: 3;
}

/* scroll bars */
.vscroll {
  grid-column: 3;
  grid-row: 1 / 3;
  display: flex;
  flex-direction: column;
  padding-bottom: 13px;
}

.vscroll button {
  display: grid;
  place-items: center;
  height: 12px;
  fill: #555;
}

.vscroll .track {
  flex: 1;
  display: grid;
  grid-template-rows: 144fr 194fr 80fr;
}

.vscroll .thumb {
  grid-row: 2;
}

.thumb {
  background: #fdfdfd;
  border: 1px solid #c6c6c6;
}

.vscroll button:first-child,
.vscroll .track + button {
  margin: 1px;
  height: 10px;
  background: #fdfdfd;
}

.hscroll {
  grid-column: 2;
  grid-row: 2;
  display: flex;
  align-items: center;
  gap: 15px;
  padding: 0 2px;
}

.hscroll button {
  display: grid;
  place-items: center;
  width: 9px;
  height: 9px;
  background: #fdfdfd;
  fill: #555;
}

.hscroll .thumb {
  flex: 1;
  height: 12px;
}

/* status bar */
.status {
  display: flex;
  align-items: center;
  height: 17px;
  padding: 0 10px 0 4px;
  gap: 10px;
  border: 1px solid #d98a76;
  border-top-color: #d0d0d0;
  background: #fdfdfd;
  font-size: 7px;
  color: #555;
}

.notes,
.comments {
  display: flex;
  align-items: center;
  gap: 3px;
}

.notes {
  margin-left: auto;
}

.views {
  display: flex;
  align-self: stretch;
}

.views button {
  display: grid;
  place-items: center;
  width: 23px;
}

.views .on {
  background: #cfcfcf;
}

.zoom {
  display: flex;
  align-items: center;
  gap: 2px;
  margin-left: -8px;
}

.zoom span {
  margin: 0 6px 0 8px;
}

.zoom input {
  width: 70px;
  height: 9px;
  margin: 0;
  appearance: none;
  background: linear-gradient(#bbb, #bbb) center / 100% 1px no-repeat;
}

.zoom input::-webkit-slider-thumb {
  appearance: none;
  width: 3px;
  height: 8px;
  background: #555;
}
```
